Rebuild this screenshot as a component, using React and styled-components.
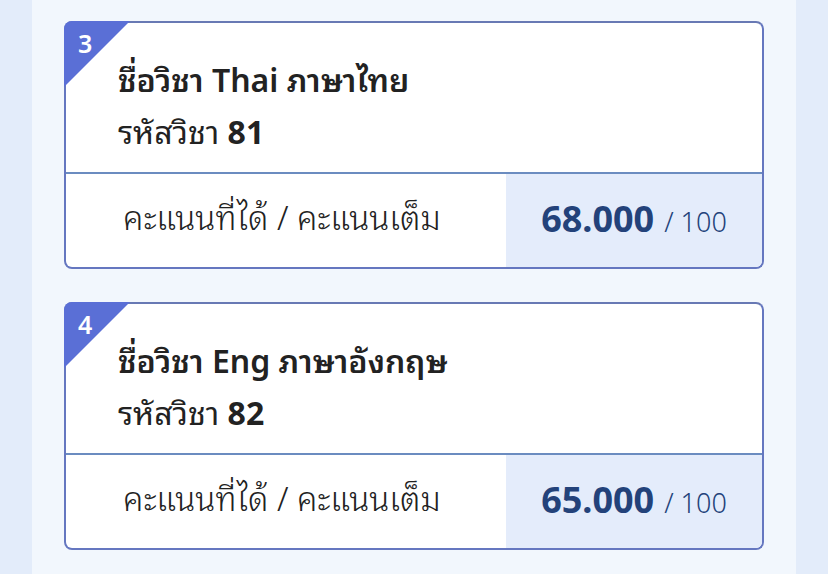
import React from "react";
import styled, { createGlobalStyle } from "styled-components";

const GlobalStyle = createGlobalStyle`
    html, body {
        margin: 0;
        padding: 0;
    }

    body {
        font-family: "Noto Sans", "Noto Sans Thai Looped", "Noto Looped Thai", "Noto Looped Thai UI", "Loma", "Garuda", "Sarabun", "Noto Sans Thai", sans-serif;
        color: #222222;
        background: #e3ecfa;
    }
`;

const Page = styled.main`
    min-height: 100vh;
    padding: 0 32px;
    background: #e3ecfa;
`;

const Panel = styled.section`
    min-height: 100vh;
    display: flex;
    flex-direction: column;
    gap: 33px;
    padding: 21px 32px 40px;
    background: #f2f7fd;
`;

const Card = styled.article`
    position: relative;
    border: 2px solid #6577c0;
    border-top-color: #6879b4;
    border-radius: 8px;
    background: #ffffff;
`;

const Badge = styled.div`
    position: absolute;
    top: -2px;
    left: -2px;
    width: 66px;
    height: 66px;
    border-top-left-radius: 8px;
    background: #5a6fd6;
    clip-path: polygon(0 0, 100% 0, 0 100%);
`;

const BadgeNumber = styled.span`
    position: absolute;
    top: 5px;
    left: 14px;
    font-size: 25px;
    font-weight: 600;
    color: #ffffff;
`;

const CardHead = styled.div`
    padding: 31px 20px 14px 52px;
`;

const Line = styled.p`
    margin: 0;
    font-size: 32px;
    line-height: 52px;
    font-weight: ${(props) => (props.$strong ? 600 : 400)};
`;

const Code = styled.b`
    font-weight: 700;
`;

const ScoreRow = styled.div`
    display: grid;
    grid-template-columns: 440px 1fr;
    height: 93px;
    border-top: 2px solid #6b8cc0;
`;

const ScoreLabel = styled.div`
    display: flex;
    align-items: center;
    justify-content: center;
    padding: 0 8px 10px 0;
    font-size: 33px;
    font-weight: 300;
`;

const ScoreValue = styled.div`
    display: flex;
    align-items: baseline;
    justify-content: center;
    align-content: center;
    flex-wrap: wrap;
    gap: 10px;
    padding-bottom: 4px;
    background: #e4ecfb;
    border-bottom-right-radius: 6px;
    color: #23427a;
`;

const Got = styled.span`
    font-size: 36px;
    font-weight: 700;
`;

const Full = styled.span`
    font-size: 27px;
    font-weight: 300;
`;

const subjects = [
    { no: 3, name: "Thai ภาษาไทย", code: 81, score: "68.000", full: 100 },
    { no: 4, name: "Eng ภาษาอังกฤษ", code: 82, score: "65.000", full: 100 },
];

function SubjectCard({ subject }) {
    return (
        <Card>
            <Badge>
                <BadgeNumber>{subject.no}</BadgeNumber>
            </Badge>
            <CardHead>
                <Line $strong>ชื่อวิชา {subject.name}</Line>
                <Line>
                    รหัสวิชา <Code>{subject.code}</Code>
                </Line>
            </CardHead>
            <ScoreRow>
                <ScoreLabel>คะแนนที่ได้ / คะแนนเต็ม</ScoreLabel>
                <ScoreValue>
                    <Got>{subject.score}</Got>
                    <Full>/ {subject.full}</Full>
                </ScoreValue>
            </ScoreRow>
        </Card>
    );
}

export default function App() {
    return (
        <Page>
            <GlobalStyle />
            <Panel>
                {subjects.map((s) => (
                    <SubjectCard key={s.no} subject={s} />
                ))}
            </Panel>
        </Page>
    );
}
